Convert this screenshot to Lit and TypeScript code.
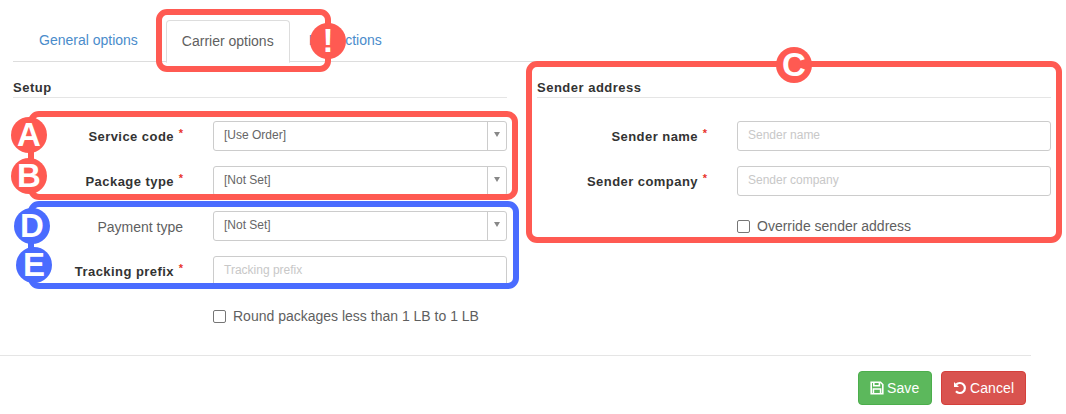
import { LitElement, html, css, type TemplateResult } from 'lit'
import { customElement } from 'lit/decorators.js'

interface Box { x: number, y: number, w: number, h: number, color: string }
interface Mark { x: number, y: number, text: string, color: string }

const RED = '#ff5a52'
const BLUE = '#4a6cff'

// callouts drawn over the form, positions are the content here
const BOXES: Box[] = [
  { x: 156, y: 9, w: 175, h: 63, color: RED },
  { x: 28, y: 111, w: 490, h: 89, color: RED },
  { x: 28, y: 201, w: 491, h: 88, color: BLUE },
  { x: 526, y: 61, w: 536, h: 182, color: RED }
]

const MARKS: Mark[] = [
  { x: 328, y: 41, text: '!', color: RED },
  { x: 29, y: 135, text: 'A', color: RED },
  { x: 29, y: 176, text: 'B', color: RED },
  { x: 794, y: 65, text: 'C', color: RED },
  { x: 32, y: 226, text: 'D', color: BLUE },
  { x: 34, y: 265, text: 'E', color: BLUE }
]

@customElement('app-root')
export class AppRoot extends LitElement {
  static styles = css`
    :host {
      display: block;
      position: relative;
      width: 1066px;
      height: 414px;
      overflow: hidden;
      background: #fff;
      color: #5f5f5f;
      font-family: "Liberation Sans", Arial, sans-serif;
      font-size: 14px;
    }

    .tabs {
      display: flex;
      height: 41px;
      margin: 20px 35px 0 13px;
      padding-left: 11px;
      border-bottom: 1px solid #ddd;
    }

    .tab {
      padding: 0 15px;
      line-height: 40px;
      color: #4a8ccb;
      margin-right: 13px;
    }

    .tab.active {
      color: #5f5f5f;
      background: #fff;
      border: 1px solid #ddd;
      border-bottom-color: #fff;
      border-radius: 4px 4px 0 0;
      height: 41px;
      margin-right: 4px;
    }

    .columns {
      display: grid;
      grid-template-columns: 494px 514px;
      column-gap: 30px;
      padding: 18px 0 0 13px;
      height: 275px;
    }

    h4 {
      box-sizing: border-box;
      margin: 0 0 21px;
      height: 18px;
      border-bottom: 1px solid #e5e5e5;
      color: #333;
      font-size: 13px;
      line-height: 16px;
      font-weight: bold;
      letter-spacing: 0.5px;
    }

    .row {
      display: grid;
      align-items: center;
      height: 30px;
      margin-bottom: 15px;
    }

    .left .row { grid-template-columns: 170px 294px; column-gap: 30px; }
    .right .row { grid-template-columns: 170px 314px; column-gap: 30px; }

    label {
      text-align: right;
      line-height: 30px;
      padding-top: 3px;
      white-space: nowrap;
    }

    label.required {
      color: #333;
      font-weight: bold;
      font-size: 13px;
      letter-spacing: 0.45px;
      padding-right: 9px;
      position: relative;
    }

    label.required::after {
      content: '*';
      position: absolute;
      right: 0;
      top: 0;
      color: #e8352c;
      font-size: 11px;
      font-weight: bold;
      line-height: 28px;
      letter-spacing: 0;
    }

    .field {
      display: flex;
      align-items: center;
      box-sizing: border-box;
      height: 30px;
      border: 1px solid #ccc;
      border-radius: 3px;
      font-size: 12px;
      padding-left: 10px;
      color: #666;
      background: #fff;
    }

    .field.empty { color: #c8c8c8; }

    .field .text { flex: 1; padding-bottom: 2px; }

    .arrow {
      display: flex;
      align-items: center;
      justify-content: center;
      width: 18px;
      height: 28px;
      border-left: 1px solid #ccc;
    }

    .arrow::before {
      content: '';
      border: 3.5px solid transparent;
      border-top: 5px solid #888;
      border-bottom: 0;
      margin-bottom: 3px;
    }

    .check {
      display: flex;
      align-items: center;
      height: 20px;
      margin: 22px 0 0 200px;
      gap: 7px;
      white-space: nowrap;
    }

    .box {
      box-sizing: border-box;
      width: 13px;
      height: 13px;
      border: 1px solid #767676;
      border-radius: 2px;
      background: #fff;
    }

    .footer {
      display: flex;
      justify-content: flex-end;
      gap: 9px;
      margin-right: 35px;
      padding: 15px 5px 0 0;
      border-top: 1px solid #e5e5e5;
    }

    button {
      display: flex;
      align-items: center;
      gap: 3px;
      box-sizing: border-box;
      height: 34px;
      padding: 0 11px;
      border: 1px solid;
      border-radius: 4px;
      color: #fff;
      font: inherit;
      letter-spacing: 0.1px;
    }

    button.save { width: 74px; background: #5cb85c; border-color: #4cae4c; }
    button.cancel { width: 85px; background: #d9534f; border-color: #d43f3a; }

    svg { width: 14px; height: 14px; flex: none; }

    .callout {
      position: absolute;
      box-sizing: border-box;
      border: 6px solid;
      border-radius: 11px;
    }

    .mark {
      position: absolute;
      width: 36px;
      height: 36px;
      margin: -18px 0 0 -18px;
      border-radius: 50%;
      color: #fff;
      text-align: center;
      font-size: 33px;
      line-height: 36px;
      font-weight: bold;
    }
  `

  private row (name: string, required: boolean, value: string, select = false): TemplateResult {
    return html`
      <div class="row">
        <label class=${required ? 'required' : ''}>${name}</label>
        <div class="field ${select ? '' : 'empty'}">
          <span class="text">${value}</span>
          ${select ? html`<span class="arrow"></span>` : ''}
        </div>
      </div>
    `
  }

  render (): TemplateResult {
    return html`
      <nav class="tabs">
        <div class="tab">General options</div>
        <div class="tab active">Carrier options</div>
        <div class="tab">Restrictions</div>
      </nav>

      <div class="columns">
        <section class="left">
          <h4>Setup</h4>
          ${this.row('Service code', true, '[Use Order]', true)}
          ${this.row('Package type', true, '[Not Set]', true)}
          ${this.row('Payment type', false, '[Not Set]', true)}
          ${this.row('Tracking prefix', true, 'Tracking prefix')}
          <div class="check"><span class="box"></span>Round packages less than 1 LB to 1 LB</div>
        </section>
        <section class="right">
          <h4>Sender address</h4>
          ${this.row('Sender name', true, 'Sender name')}
          ${this.row('Sender company', true, 'Sender company')}
          <div class="check"><span class="box"></span>Override sender address</div>
        </section>
      </div>

      <div class="footer">
        <button class="save">
          <svg viewBox="0 0 14 14" fill="none" stroke="currentColor" stroke-width="1.6">
            <path d="M1.2 1.2h9.3l2.3 2.3v9.3H1.2z"/>
            <path d="M3.8 1.4v3.4h5.6V1.4M3.4 12.6V8h7.2v4.6"/>
          </svg>Save
        </button>
        <button class="cancel">
          <svg viewBox="0 0 14 14" fill="none" stroke="currentColor" stroke-width="2.2">
            <path d="M3.2 3.6A5 5 0 1 1 3 10.2"/>
            <path d="M1 1v5h5z" fill="currentColor" stroke="none"/>
          </svg>Cancel
        </button>
      </div>

      ${BOXES.map(b => html`<div class="callout" style="left:${b.x}px;top:${b.y}px;width:${b.w}px;height:${b.h}px;border-color:${b.color}"></div>`)}
      ${MARKS.map(m => html`<div class="mark" style="left:${m.x}px;top:${m.y}px;background:${m.color}">${m.text}</div>`)}
    `
  }
}
